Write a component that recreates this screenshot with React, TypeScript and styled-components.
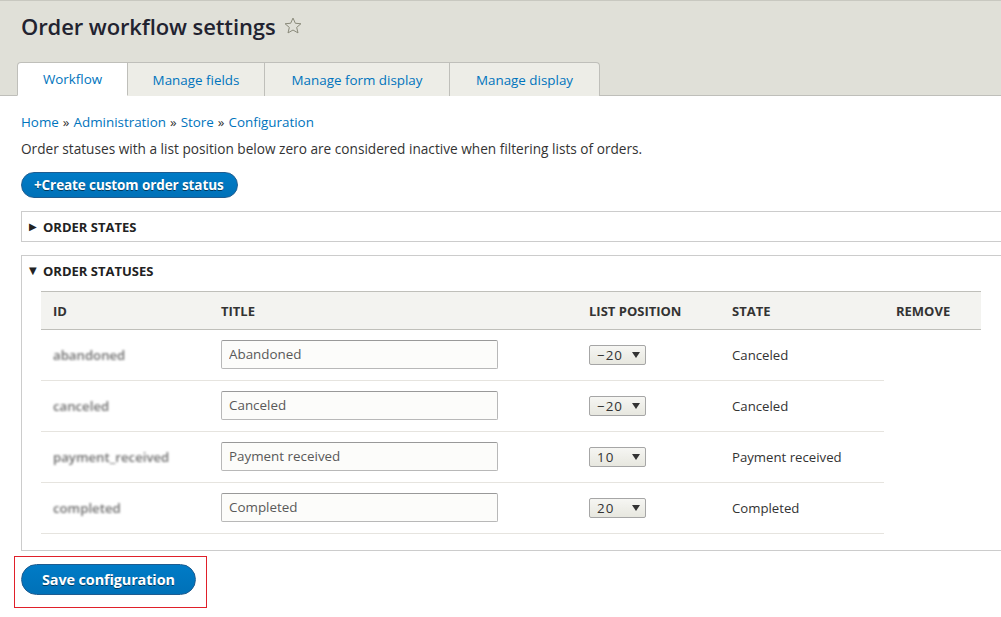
import React from "react";
import styled, { createGlobalStyle } from "styled-components";

const GlobalStyle = createGlobalStyle`
  html, body { margin: 0; padding: 0; background: #fff; overflow: hidden; }
  body { font-family: "Open Sans", "Noto Sans", sans-serif; font-size: 13.4px; color: #333; }
  * { box-sizing: border-box; }
`;

const Header = styled.header`
  background: #e0e0d8;
  border-top: 1px solid #c8c8c0;
  border-bottom: 1px solid #bfbfba;
  padding: 11px 0 0 17px;
  height: 96px;
  display: flex;
  flex-direction: column;
`;

const TitleRow = styled.div`
  display: flex;
  align-items: center;
  gap: 7px;
  padding-left: 4px;
  height: 28px;
`;

const Title = styled.h1`
  margin: 0;
  font-size: 22px;
  font-weight: 600;
  color: #222330;
  letter-spacing: -0.1px;
`;

const Tabs = styled.nav`
  display: flex;
  margin-top: 22px;
`;

const Tab = styled.a<{ $active?: boolean; $last?: boolean; $w: number }>`
  width: ${(p) => p.$w}px;
  display: flex;
  align-items: center;
  justify-content: center;
  color: #0074bd;
  text-decoration: none;
  font-size: 13.4px;
  background: ${(p) => (p.$active ? "#fff" : "#edede7")};
  border: 1px solid #bfbfba;
  border-left-width: ${(p) => (p.$active ? 1 : 0)}px;
  border-bottom: ${(p) => (p.$active ? "1px solid #fff" : "none")};
  border-radius: ${(p) => (p.$active ? "4px 0 0 0" : p.$last ? "0 4px 0 0" : "0")};
  margin-bottom: -1px;
  height: 34px;
`;

const Content = styled.main`
  padding: 17px 0 0 21px;
`;

const Breadcrumb = styled.div`
  display: flex;
  gap: 4px;
  line-height: 18px;
  color: #333;
  a { color: #0074bd; text-decoration: none; }
`;

const Description = styled.p`
  margin: 9px 0 0;
  line-height: 18px;
  font-size: 13.65px;
`;

const Button = styled.button<{ $big?: boolean }>`
  font-family: inherit;
  font-weight: 700;
  color: #fff;
  border: 1px solid #1e5c90;
  background: linear-gradient(to bottom, #007bc6, #0071b8);
  border-radius: 20px;
  cursor: pointer;
  text-shadow: 0 1px rgba(0,0,0,0.5);
  font-size: ${(p) => (p.$big ? "14.4px" : "13.5px")};
  height: ${(p) => (p.$big ? 31 : 26)}px;
  padding: ${(p) => (p.$big ? "0 20px" : "0 13px 0 12px")};
  display: inline-flex;
  align-items: center;
  letter-spacing: -0.1px;
`;

const CreateWrap = styled.div`
  margin-top: 14px;
`;

const Details = styled.details`
  margin: 13px -20px 0 0;
  border: 1px solid #ccc;
  summary { list-style: none; }
  summary::-webkit-details-marker { display: none; }
`;

const Summary = styled.summary<{ $open?: boolean }>`
  display: flex;
  align-items: center;
  height: 29px;
  padding-left: 6px;
  font-weight: 700;
  font-size: 13px;
  color: #222;
  text-transform: uppercase;
  cursor: pointer;
  &::before {
    content: "${(p) => (p.$open ? "▼" : "▶")}";
    font-family: "DejaVu Sans", sans-serif;
    font-size: 10px;
    width: 14px;
    display: inline-block;
    padding-left: 1px;
  }
`;

const DetailsBody = styled.div`
  padding: 6px 0 16px 19px;
  width: 960px;
`;

const Table = styled.table`
  border-collapse: collapse;
  width: 940px;
`;

const Th = styled.th<{ $w?: number }>`
  text-align: left;
  font-size: 13px;
  font-weight: 700;
  text-transform: uppercase;
  color: #333;
  background: #f3f3f0;
  border-top: 1px solid #bfbfba;
  border-bottom: 1px solid #bfbfba;
  height: 38px;
  padding: 0 12px;
  width: ${(p) => (p.$w ? `${p.$w}px` : "auto")};
`;

const Td = styled.td`
  height: 51px;
  padding: 0 12px;
  border-bottom: 1px solid #e6e4df;
  vertical-align: middle;
  font-size: 13.2px;
`;

const IdText = styled.span`
  display: inline-block;
  color: #6f6f6f;
  font-weight: 600;
  filter: blur(0.9px);
`;

const TextInput = styled.input`
  font-family: inherit;
  font-size: 13.4px;
  color: #595959;
  width: 277px;
  height: 29px;
  padding: 0 7px;
  background: #fcfcfa;
  border: 1px solid #b8b8b8;
  border-top-color: #999;
  border-radius: 2px;
  margin-top: -2px;
`;

const Select = styled.div`
  width: 57px;
  height: 20px;
  border: 1px solid #a6a6a6;
  border-radius: 2px;
  background: linear-gradient(to bottom, #f6f6f3, #e7e7df);
  display: flex;
  align-items: center;
  justify-content: space-between;
  padding: 0 5px 0 7px;
  font-size: 13.4px;
  color: #333;
  letter-spacing: 1px;
`;

const Caret = styled.span`
  width: 0;
  height: 0;
  border-left: 4px solid transparent;
  border-right: 4px solid transparent;
  border-top: 6px solid #333;
`;

const Actions = styled.div`
  margin-top: 5px;
  padding: 7px 0 0 6px;
  margin-left: -7px;
  width: 193px;
  height: 52px;
  border: 1px solid #e0202a;
`;

const rows = [
  { id: "abandoned", title: "Abandoned", pos: "\u221220", state: "Canceled" },
  { id: "canceled", title: "Canceled", pos: "\u221220", state: "Canceled" },
  { id: "payment_received", title: "Payment received", pos: "10", state: "Payment received" },
  { id: "completed", title: "Completed", pos: "20", state: "Completed" },
];

const Star = () => (
  <svg width="20" height="20" viewBox="0 0 24 24" fill="none" stroke="#8a8a7a" strokeWidth="1.2">
    <path d="M12 2.5l2.8 6.2 6.7.6-5.1 4.4 1.6 6.6L12 16.8l-6 3.5 1.6-6.6-5.1-4.4 6.7-.6z" />
  </svg>
);

export default function App() {
  return (
    <>
      <GlobalStyle />
      <Header>
        <TitleRow>
          <Title>Order workflow settings</Title>
          <Star />
        </TitleRow>
        <Tabs>
          <Tab $active $w={111}>Workflow</Tab>
          <Tab $w={137}>Manage fields</Tab>
          <Tab $w={185}>Manage form display</Tab>
          <Tab $w={150} $last>Manage display</Tab>
        </Tabs>
      </Header>
      <Content>
        <Breadcrumb>
          <a>Home</a>»<a>Administration</a>»<a>Store</a>»<a>Configuration</a>
        </Breadcrumb>
        <Description>
          Order statuses with a list position below zero are considered inactive when filtering lists of orders.
        </Description>
        <CreateWrap>
          <Button>+Create custom order status</Button>
        </CreateWrap>
        <Details>
          <Summary>Order states</Summary>
        </Details>
        <Details open>
          <Summary $open>Order statuses</Summary>
          <DetailsBody>
            <Table>
              <thead>
                <tr>
                  <Th $w={168}>ID</Th>
                  <Th $w={368}>Title</Th>
                  <Th $w={143}>List position</Th>
                  <Th $w={164}>State</Th>
                  <Th>Remove</Th>
                </tr>
              </thead>
              <tbody>
                {rows.map((r) => (
                  <tr key={r.id}>
                    <Td><IdText>{r.id}</IdText></Td>
                    <Td><TextInput defaultValue={r.title} /></Td>
                    <Td>
                      <Select>
                        <span>{r.pos}</span>
                        <Caret />
                      </Select>
                    </Td>
                    <Td>{r.state}</Td>
                  </tr>
                ))}
              </tbody>
            </Table>
          </DetailsBody>
        </Details>
        <Actions>
          <Button $big>Save configuration</Button>
        </Actions>
      </Content>
    </>
  );
}
